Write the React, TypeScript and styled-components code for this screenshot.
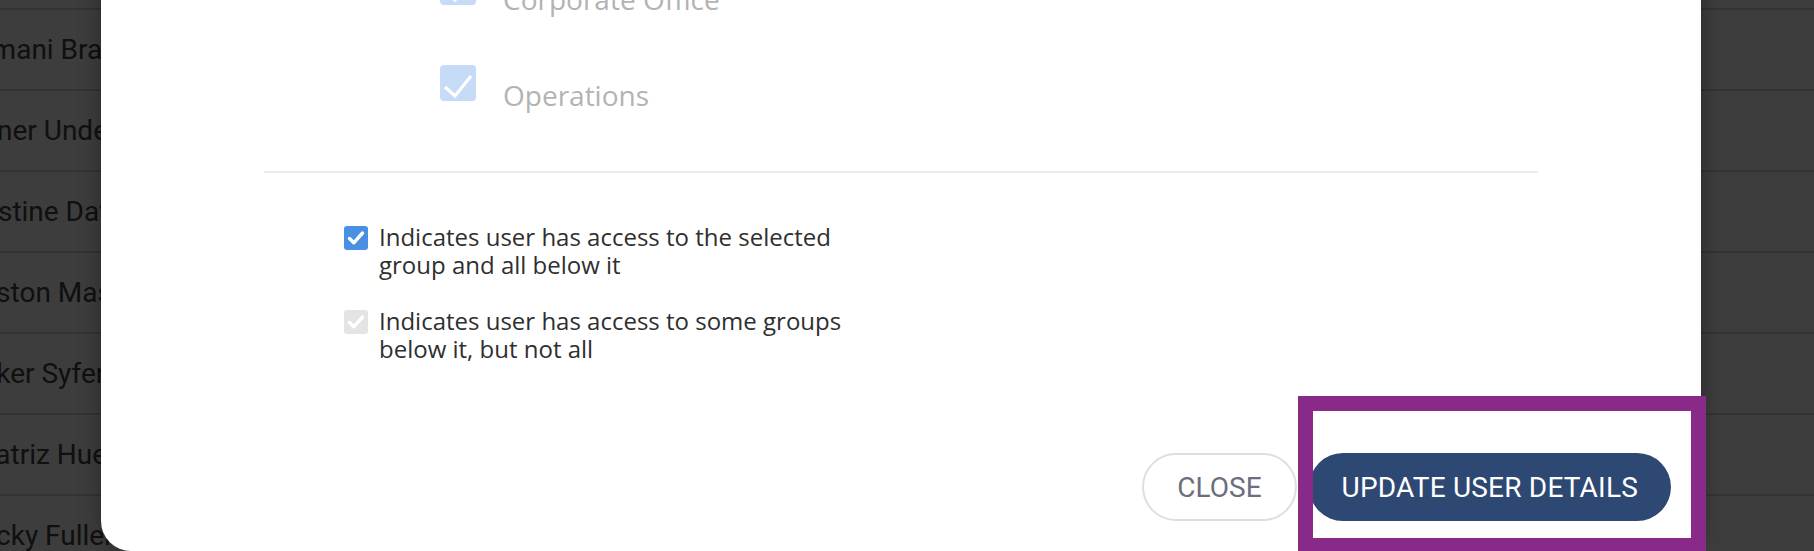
import React from 'react';
import styled, {createGlobalStyle} from 'styled-components';

interface UserEntry {
    name: string;
    shift: number;
}

const users: UserEntry[] = [
    {name: 'Harper Collins', shift: -20},
    {name: 'Imani Bradley', shift: -16},
    {name: 'Abner Underwood', shift: -37},
    {name: 'Christine Davis', shift: -52},
    {name: 'Winston Mason', shift: -51},
    {name: 'Parker Syfert', shift: -46},
    {name: 'Beatriz Huerta', shift: -37},
    {name: 'Ricky Fuller', shift: -28},
];

const groups = ['Corporate Office', 'Operations'];

const TreeCheck = () => (
    <svg width="36" height="36" viewBox="0 0 36 36">
        <polyline points="5,22 15,31 31,11" fill="none" stroke="#fff" strokeWidth="3.2"/>
    </svg>
);

const SmallCheck = () => (
    <svg width="24" height="24" viewBox="0 0 24 24">
        <polyline points="5.5,12.5 9.8,16.8 18.5,7" fill="none" stroke="#fff" strokeWidth="3.4"
                  strokeLinecap="round" strokeLinejoin="round"/>
    </svg>
);

const App: React.FC = () => {
    return (
        <Page>
            <GlobalStyle/>
            <UserList>
                {users.map((u) => (
                    <UserRow key={u.name}>
                        <UserName $shift={u.shift}>{u.name}</UserName>
                    </UserRow>
                ))}
            </UserList>
            <Overlay>
                <Modal>
                    <Body>
                        <Tree>
                            {groups.map((g) => (
                                <TreeItem key={g}>
                                    <TreeBox><TreeCheck/></TreeBox>
                                    <TreeLabel>{g}</TreeLabel>
                                </TreeItem>
                            ))}
                        </Tree>
                        <Divider/>
                        <Legend>
                            <LegendItem>
                                <LegendBox $tone="full"><SmallCheck/></LegendBox>
                                <LegendText>
                                    Indicates user has access to the selected<br/>group and all below it
                                </LegendText>
                            </LegendItem>
                            <LegendItem>
                                <LegendBox $tone="partial"><SmallCheck/></LegendBox>
                                <LegendText>
                                    Indicates user has access to some groups<br/>below it, but not all
                                </LegendText>
                            </LegendItem>
                        </Legend>
                    </Body>
                    <Footer>
                        <CloseButton>CLOSE</CloseButton>
                        <Highlighted>
                            <UpdateButton>UPDATE USER DETAILS</UpdateButton>
                            <HighlightFrame/>
                        </Highlighted>
                    </Footer>
                </Modal>
            </Overlay>
        </Page>
    );
};

const GlobalStyle = createGlobalStyle`
  html, body {
    margin: 0;
    padding: 0;
    height: 100%;
    overflow: hidden;
    background: #fff;
  }

  #root {
    height: 100%;
  }
`;

const Page = styled.div`
  position: relative;
  width: 100vw;
  height: 100vh;
  overflow: hidden;
  background: #fff;
`;

const UserList = styled.ul`
  list-style: none;
  margin: -71px 0 0;
  padding: 0;
`;

const UserRow = styled.li`
  display: flex;
  align-items: center;
  height: 79px;
  border-bottom: 2px solid #d5d5d5;
  font-family: Roboto, "Liberation Sans", sans-serif;
  font-size: 28px;
  color: #434343;
  white-space: nowrap;
`;

const UserName = styled.span<{ $shift: number }>`
  margin-left: ${(p) => p.$shift}px;
`;

const Overlay = styled.div`
  position: absolute;
  inset: 0;
  display: flex;
  align-items: flex-end;
  padding-left: 101px;
  background: rgba(0, 0, 0, 0.76);
  overflow: hidden;
`;

const Modal = styled.div`
  display: flex;
  flex-direction: column;
  flex-shrink: 0;
  width: 1600px;
  background: #fff;
  border-radius: 30px;
  box-shadow: 0 0 22px rgba(0, 0, 0, 0.35);
`;

const Body = styled.div`
  padding: 40px 163px 0;
`;

const Tree = styled.ul`
  display: flex;
  flex-direction: column;
  gap: 48px;
  list-style: none;
  margin: 0;
  padding: 0 0 58px 176px;
`;

const TreeItem = styled.li`
  display: flex;
  align-items: flex-start;
  gap: 27px;
`;

const TreeBox = styled.span`
  display: flex;
  width: 36px;
  height: 36px;
  flex-shrink: 0;
  border-radius: 4px;
  background: #c6dbf5;
`;

const TreeLabel = styled.span`
  margin-top: 12px;
  font-family: "Open Sans", "Noto Sans", sans-serif;
  font-size: 28px;
  line-height: 36px;
  color: #b3b3b3;
`;

const Divider = styled.hr`
  height: 2px;
  margin: 0;
  border: none;
  background: #ebebeb;
`;

const Legend = styled.div`
  display: flex;
  flex-direction: column;
  gap: 28px;
  margin-top: 50px;
  padding-left: 80px;
`;

const LegendItem = styled.div`
  display: flex;
  align-items: flex-start;
  gap: 11px;
`;

const LegendBox = styled.span<{ $tone: 'full' | 'partial' }>`
  display: flex;
  width: 24px;
  height: 24px;
  flex-shrink: 0;
  margin-top: 3px;
  border-radius: 3px;
  background: ${(p) => (p.$tone === 'full' ? '#4a90e2' : '#e4e4e4')};
`;

const LegendText = styled.span`
  font-family: "Open Sans", "Noto Sans", sans-serif;
  font-size: 24px;
  line-height: 28px;
  color: #2f2f2f;
`;

const Footer = styled.div`
  display: flex;
  justify-content: flex-end;
  gap: 12px;
  padding: 90px 30px 30px;
`;

const CloseButton = styled.button`
  box-sizing: border-box;
  height: 68px;
  padding: 0 33px;
  border: 2px solid #dedede;
  border-radius: 34px;
  background: #fff;
  font-family: Roboto, "Liberation Sans", sans-serif;
  font-size: 28px;
  color: #6b6e7c;
`;

const Highlighted = styled.div`
  position: relative;
  display: flex;
`;

const UpdateButton = styled.button`
  box-sizing: border-box;
  height: 68px;
  padding: 0 33px;
  border: none;
  border-radius: 34px;
  background: #2d4872;
  font-family: Roboto, "Liberation Sans", sans-serif;
  font-size: 28px;
  letter-spacing: 0.2px;
  color: #fff;
`;

const HighlightFrame = styled.span`
  position: absolute;
  top: -57px;
  left: -11px;
  right: -35px;
  bottom: -32px;
  border: 15px solid #892a88;
  pointer-events: none;
`;

export default App;
